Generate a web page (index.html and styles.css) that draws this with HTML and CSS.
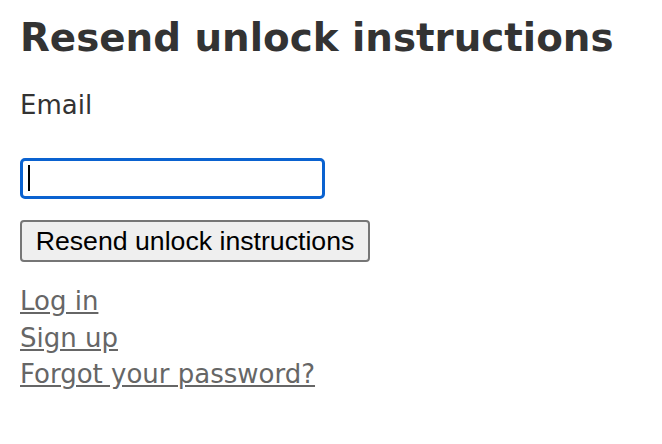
FILE: index.html
```html
<!DOCTYPE html>
<html lang="en">
<head>
    <meta charset="UTF-8">
    <meta name="viewport" content="width=device-width, initial-scale=1.0">
    <title>Resend unlock instructions</title>
    <link rel="stylesheet" href="styles.css">
</head>
<body>
    <h1>Resend unlock instructions</h1>

    <form class="unlock-form" action="#" method="post">
        <label for="user_email">Email</label>
        <div class="field">
            <input type="email" id="user_email" name="user[email]" autocomplete="email">
            <span class="caret"></span>
        </div>
        <div class="actions">
            <input type="submit" value="Resend unlock instructions">
        </div>
    </form>

    <div class="links">
        <a href="#">Log in</a><br>
        <a href="#">Sign up</a><br>
        <a href="#">Forgot your password?</a>
    </div>
</body>
</html>
```

FILE: styles.css
```css
* {
    box-sizing: border-box;
}
body {
    margin: 0;
    padding: 0 20px;
    background: #fff;
    color: #333;
    font-family: "DejaVu Sans", Verdana, sans-serif;
    font-size: 26px;
    line-height: 36px;
}
h1 {
    margin: 14px 0 25px;
    font-size: 38.8px;
    line-height: 48px;
    font-weight: bold;
}
label {
    display: block;
}
.field {
    position: relative;
    width: 305px;
    margin-top: 35px;
}
.field input {
    display: block;
    width: 305px;
    height: 41px;
    margin: 0;
    padding: 0 6px;
    border: 3px solid #0a62d0;
    border-radius: 5px;
    outline: none;
    background: #fff;
    font-size: 24px;
}
.caret {
    position: absolute;
    left: 8px;
    top: 7px;
    width: 2px;
    height: 26px;
    background: #000;
}
.actions {
    margin-top: 21px;
}
.actions input {
    display: block;
    width: 350px;
    height: 42px;
    margin: 0;
    padding: 0;
    border: 2px solid #767676;
    border-radius: 4px;
    background: #efefef;
    color: #000;
    font-family: "Liberation Sans", Arial, sans-serif;
    font-size: 26.67px;
    cursor: pointer;
}
.links {
    margin-top: 21px;
    line-height: 36.5px;
}
.links a {
    color: #666;
    text-decoration: underline;
}
```
